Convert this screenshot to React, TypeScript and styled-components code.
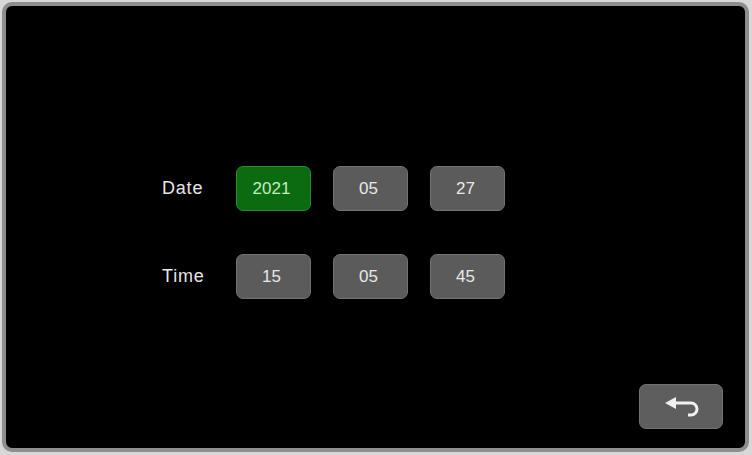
import React from 'react';
import styled, { createGlobalStyle } from 'styled-components';

const GlobalStyle = createGlobalStyle`
  html, body {
    margin: 0;
    padding: 0;
    background: #d8d8d8;
  }
  body {
    font-family: "Liberation Sans", Arial, sans-serif;
  }
`;

const Screen = styled.div`
  width: 752px;
  height: 455px;
  box-sizing: border-box;
  padding: 2px 3px 3px 2px;
  background: #d8d8d8;
`;

const Panel = styled.div`
  height: 100%;
  box-sizing: border-box;
  border: 4px solid #8e8e8e;
  border-radius: 10px;
  background: #000;
  display: flex;
  flex-direction: column;
  padding: 160px 22px 19px 156px;
`;

const Form = styled.div`
  display: grid;
  grid-template-columns: 52px repeat(3, 75px);
  grid-auto-rows: 45px;
  column-gap: 22px;
  row-gap: 43px;
`;

const Label = styled.div`
  display: flex;
  align-items: center;
  color: #e6e6e6;
  font-size: 18px;
  letter-spacing: 0.8px;
`;

const Field = styled.div<{ $active?: boolean }>`
  box-sizing: border-box;
  display: flex;
  align-items: center;
  justify-content: center;
  padding-right: 4px;
  border-radius: 7px;
  font-size: 17px;
  border: 1px solid ${(p) => (p.$active ? '#2e8a2e' : '#727272')};
  background: ${(p) => (p.$active ? '#0c6a10' : '#5b5b5b')};
  color: ${(p) => (p.$active ? '#c4eebc' : '#e8e8e8')};
`;

const Footer = styled.div`
  margin-top: auto;
  display: flex;
  justify-content: flex-end;
`;

const BackButton = styled.div`
  box-sizing: border-box;
  width: 84px;
  height: 45px;
  border-radius: 7px;
  border: 1px solid #727272;
  background: #5e5e5e;
  display: flex;
  align-items: center;
  justify-content: center;
`;

const BackIcon = () => (
  <svg width="36" height="24" viewBox="0 0 36 24">
    <polygon points="2,8 13,2 13,14" fill="#f0f0f0" />
    <path
      d="M12 8 H28 A6 6 0 0 1 28 20 H25"
      fill="none"
      stroke="#f0f0f0"
      strokeWidth="3"
    />
  </svg>
);

const rows = [
  { label: 'Date', values: ['2021', '05', '27'] },
  { label: 'Time', values: ['15', '05', '45'] },
];

const App: React.FC = () => {
  return (
    <Screen>
      <GlobalStyle />
      <Panel>
        <Form>
          {rows.map((row, r) => (
            <React.Fragment key={row.label}>
              <Label>{row.label}</Label>
              {row.values.map((v, i) => (
                <Field key={i} $active={r === 0 && i === 0}>
                  {v}
                </Field>
              ))}
            </React.Fragment>
          ))}
        </Form>
        <Footer>
          <BackButton>
            <BackIcon />
          </BackButton>
        </Footer>
      </Panel>
    </Screen>
  );
};

export default App;
